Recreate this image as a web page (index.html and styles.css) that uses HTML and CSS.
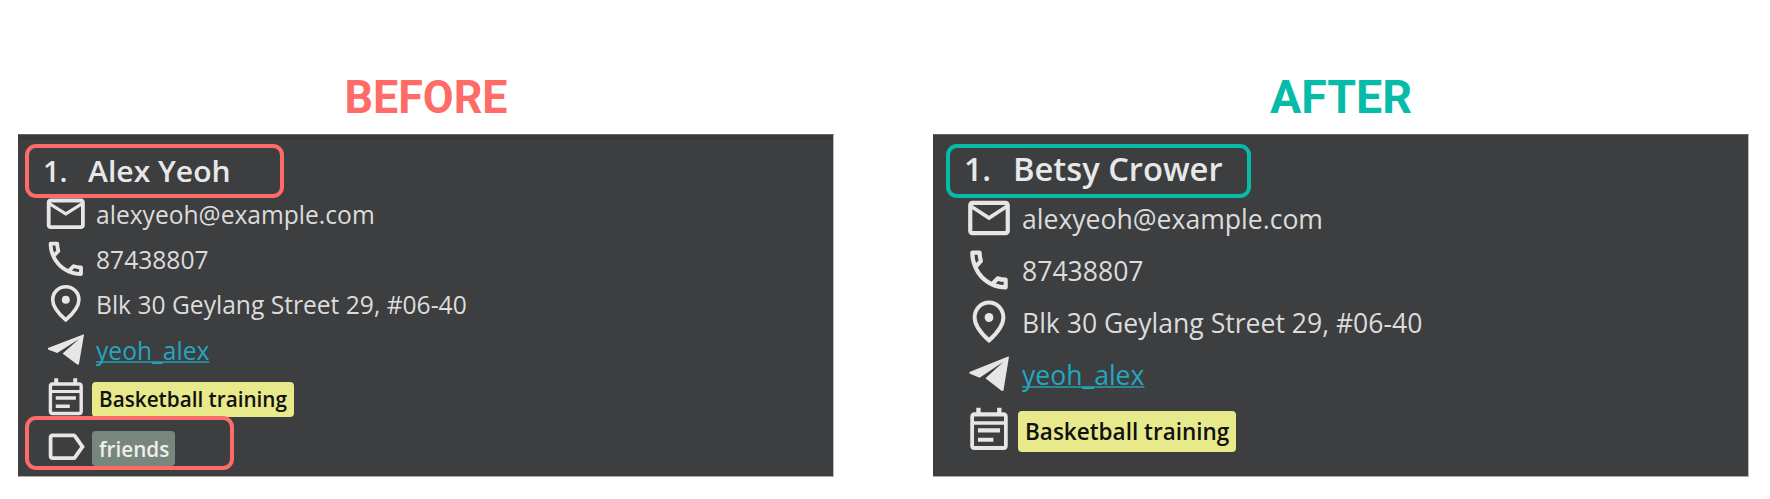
FILE: index.html
```
<!DOCTYPE html>
<html lang="en">
<head>
<meta charset="utf-8">
<title>Before and after</title>
<link rel="stylesheet" href="styles.css">
</head>
<body>
<svg class="defs" aria-hidden="true">
  <symbol id="mail" viewBox="0 0 24 24" preserveAspectRatio="none"><path d="M22 6c0-1.100-.9-2-2-2H4c-1.100 0-2 .9-2 2v12c0 1.100.9 2 2 2h16c1.100 0 2-.9 2-2V6zm-2 0l-8 5-8-5h16zm0 12H4V8l8 5 8-5v10z"/></symbol>
  <symbol id="phone" viewBox="0 0 24 24" preserveAspectRatio="none"><path d="M6.540 5c.06.890.210 1.760.450 2.590l-1.200 1.200c-.410-1.200-.670-2.470-.760-3.790h1.510m9.860 12.020c.850.240 1.720.390 2.600.450v1.490c-1.320-.090-2.590-.350-3.800-.750l1.200-1.190M7.500 3H4c-.550 0-1 .450-1 1 0 9.390 7.610 17 17 17 .550 0 1-.450 1-1v-3.490c0-.550-.450-1-1-1-1.240 0-2.450-.200-3.570-.570a.840.840 0 0 0-.310-.050c-.260 0-.510.100-.710.290l-2.200 2.200a15.150 15.150 0 0 1-6.590-6.590l2.200-2.200c.280-.280.360-.670.250-1.020A11.360 11.360 0 0 1 8.500 4c0-.550-.450-1-1-1z"/></symbol>
  <symbol id="pin" viewBox="0 0 24 24" preserveAspectRatio="none"><path d="M12 20.500C7.200 16.400 5.100 13.100 5.100 9.900a6.900 6.900 0 0 1 13.800 0c0 3.200-2.100 6.500-6.900 10.600z" fill="none" stroke="#e6e6e6" stroke-width="1.900"/><circle cx="12" cy="9.900" r="2.100"/></symbol>
  <symbol id="plane" viewBox="0 0 24 24" preserveAspectRatio="none"><path d="M21.200 3.900L2.600 11.100v.7l4.900 1.900L19 6.300l-8.700 7.700 7.700 5.700.9.100L21.600 4z"/></symbol>
  <symbol id="event" viewBox="0 0 24 24" preserveAspectRatio="none"><path fill-rule="evenodd" d="M5.900 2.200H8v2.100h7.900V2.200H18v2.100h1c1.200 0 2 .8 2 2v13.400c0 1.200-.8 2-2 2H5c-1.200 0-2-.8-2-2V6.300c0-1.200.8-2 2-2h.9zM4.800 6.200v2.200h14.400V6.200zM4.800 10v9.900h14.400V10zM6.700 11.700h10.600v1.900H6.700zM6.700 16h7.400v1.900H6.700z"/></symbol>
  <symbol id="label" viewBox="0 0 24 24" preserveAspectRatio="none"><path d="M17.630 5.840C17.270 5.330 16.670 5 16 5L5 5.010C3.900 5.010 3 5.900 3 7v10c0 1.100.9 1.990 2 1.990L16 19c.670 0 1.270-.330 1.630-.840L22 12l-4.370-6.160zM16 17H5V7h11l3.550 5L16 17z"/></symbol>
</svg>
<main class="compare">
  <section class="side before">
    <h1 class="title">BEFORE</h1>
    <article class="card">
      <h2 class="name"><span class="num">1.</span><span class="who">Alex Yeoh</span></h2>
      <div class="row"><svg class="icon"><use href="#mail"/></svg><span class="text email">alexyeoh@example.com</span></div>
      <div class="row"><svg class="icon"><use href="#phone"/></svg><span class="text phone">87438807</span></div>
      <div class="row"><svg class="icon"><use href="#pin"/></svg><span class="text address">Blk 30 Geylang Street 29, #06-40</span></div>
      <div class="row"><svg class="icon"><use href="#plane"/></svg><a class="text handle">yeoh_alex</a></div>
      <div class="row event-row"><svg class="icon"><use href="#event"/></svg><span class="chip event"><span class="chip-text">Basketball training</span></span></div>
      <div class="row tag-row"><svg class="icon"><use href="#label"/></svg><span class="chip tag"><span class="chip-text">friends</span></span></div>
      <div class="mark mark-name"></div>
      <div class="mark mark-tag"></div>
    </article>
  </section>
  <section class="side after">
    <h1 class="title">AFTER</h1>
    <article class="card">
      <h2 class="name"><span class="num">1.</span><span class="who">Betsy Crower</span></h2>
      <div class="row"><svg class="icon"><use href="#mail"/></svg><span class="text email">alexyeoh@example.com</span></div>
      <div class="row"><svg class="icon"><use href="#phone"/></svg><span class="text phone">87438807</span></div>
      <div class="row"><svg class="icon"><use href="#pin"/></svg><span class="text address">Blk 30 Geylang Street 29, #06-40</span></div>
      <div class="row"><svg class="icon"><use href="#plane"/></svg><a class="text handle">yeoh_alex</a></div>
      <div class="row event-row"><svg class="icon"><use href="#event"/></svg><span class="chip event"><span class="chip-text">Basketball training</span></span></div>
      <div class="mark mark-name"></div>
    </article>
  </section>
</main>
</body>
</html>
```
FILE: styles.css
```
* { box-sizing: border-box; }
body { margin: 0; background: #fff; font-family: "Open Sans", sans-serif; overflow: hidden; }
.defs { position: absolute; width: 0; height: 0; }
.compare { display: grid; grid-template-columns: 816px 816px; column-gap: 99px; padding: 56px 0 0 18px; height: 499px; }
.side { display: flex; flex-direction: column; }
.title { margin: 0; height: 78px; line-height: 82px; text-align: center; font-family: Roboto, sans-serif; font-size: 46.5px; font-weight: 700; }
.before .title { color: #ff6b66; transform: scaleX(.962); }
.after .title { color: #07bba9; }
.card { position: relative; height: 343px; background: #3d3e40; border-top: 1px solid #666; border-bottom: 1px solid #aaa; border-right: 1px solid #bbb; color: #dcdcdc; }
.name { margin: 0; display: flex; align-items: center; color: #e8e8e8; font-weight: 600; white-space: nowrap; }
.row { display: flex; align-items: center; white-space: nowrap; }
.icon { flex: none; display: block; fill: #e6e6e6; }
.text, .who, .num, .chip-text { display: inline-block; transform-origin: 0 50%; }
.text { transform: scaleX(.984); }
.handle { color: #22a7c0; text-decoration: underline 2px #2b8796; text-decoration-skip-ink: none; }
.chip { display: flex; align-items: center; border-radius: 4px; font-weight: 600; }
.event { background: #e8e98b; color: #111; }
.tag { background: #78877e; color: #eee; }
.mark { position: absolute; height: 54px; border: 4px solid #ff6b66; border-radius: 11px; }
.after .mark { border-color: #07bba9; }

.before .card { background: linear-gradient(#383838 5px, #3d3e40 5px); }
.before .name { height: 56px; padding: 14px 0 0 25px; font-size: 29px; }
.before .num { width: 44.500px; }
.before .who { transform: scaleX(1.038); }
.before .row { height: 45.300px; padding-left: 25px; font-size: 25px; }
.before .icon { width: 45.600px; height: 45.600px; margin-right: 7.500px; }
.before .event-row { height: 50px; }
.before .tag-row { height: 50px; }
.before .chip { height: 35px; font-size: 20.700px; line-height: 28px; padding: 0 0 1px 7px; margin: 5px 0 0 -4px; }
.before .event { width: 202px; }
.before .tag { width: 83px; margin-top: 3px; padding-bottom: 0; }
.before .mark-name { left: 7px; top: 8.500px; width: 259px; }
.before .mark-tag { left: 7px; top: 280.500px; width: 209px; }

.after .name { height: 57px; padding: 9px 0 0 31px; font-size: 32px; }
.after .num { width: 48.500px; }
.after .who { transform: scaleX(1.021); }
.after .row { height: 52px; padding-left: 31px; font-size: 27px; }
.after .icon { width: 50px; height: 52px; margin-right: 8px; }
.after .event-row { height: 57px; }
.after .chip { width: 218px; height: 41px; font-size: 22.500px; line-height: 30px; padding: 1px 0 0 7px; margin: 6px 0 0 -4px; }
.after .mark-name { left: 13px; top: 8.500px; width: 305px; }
```
